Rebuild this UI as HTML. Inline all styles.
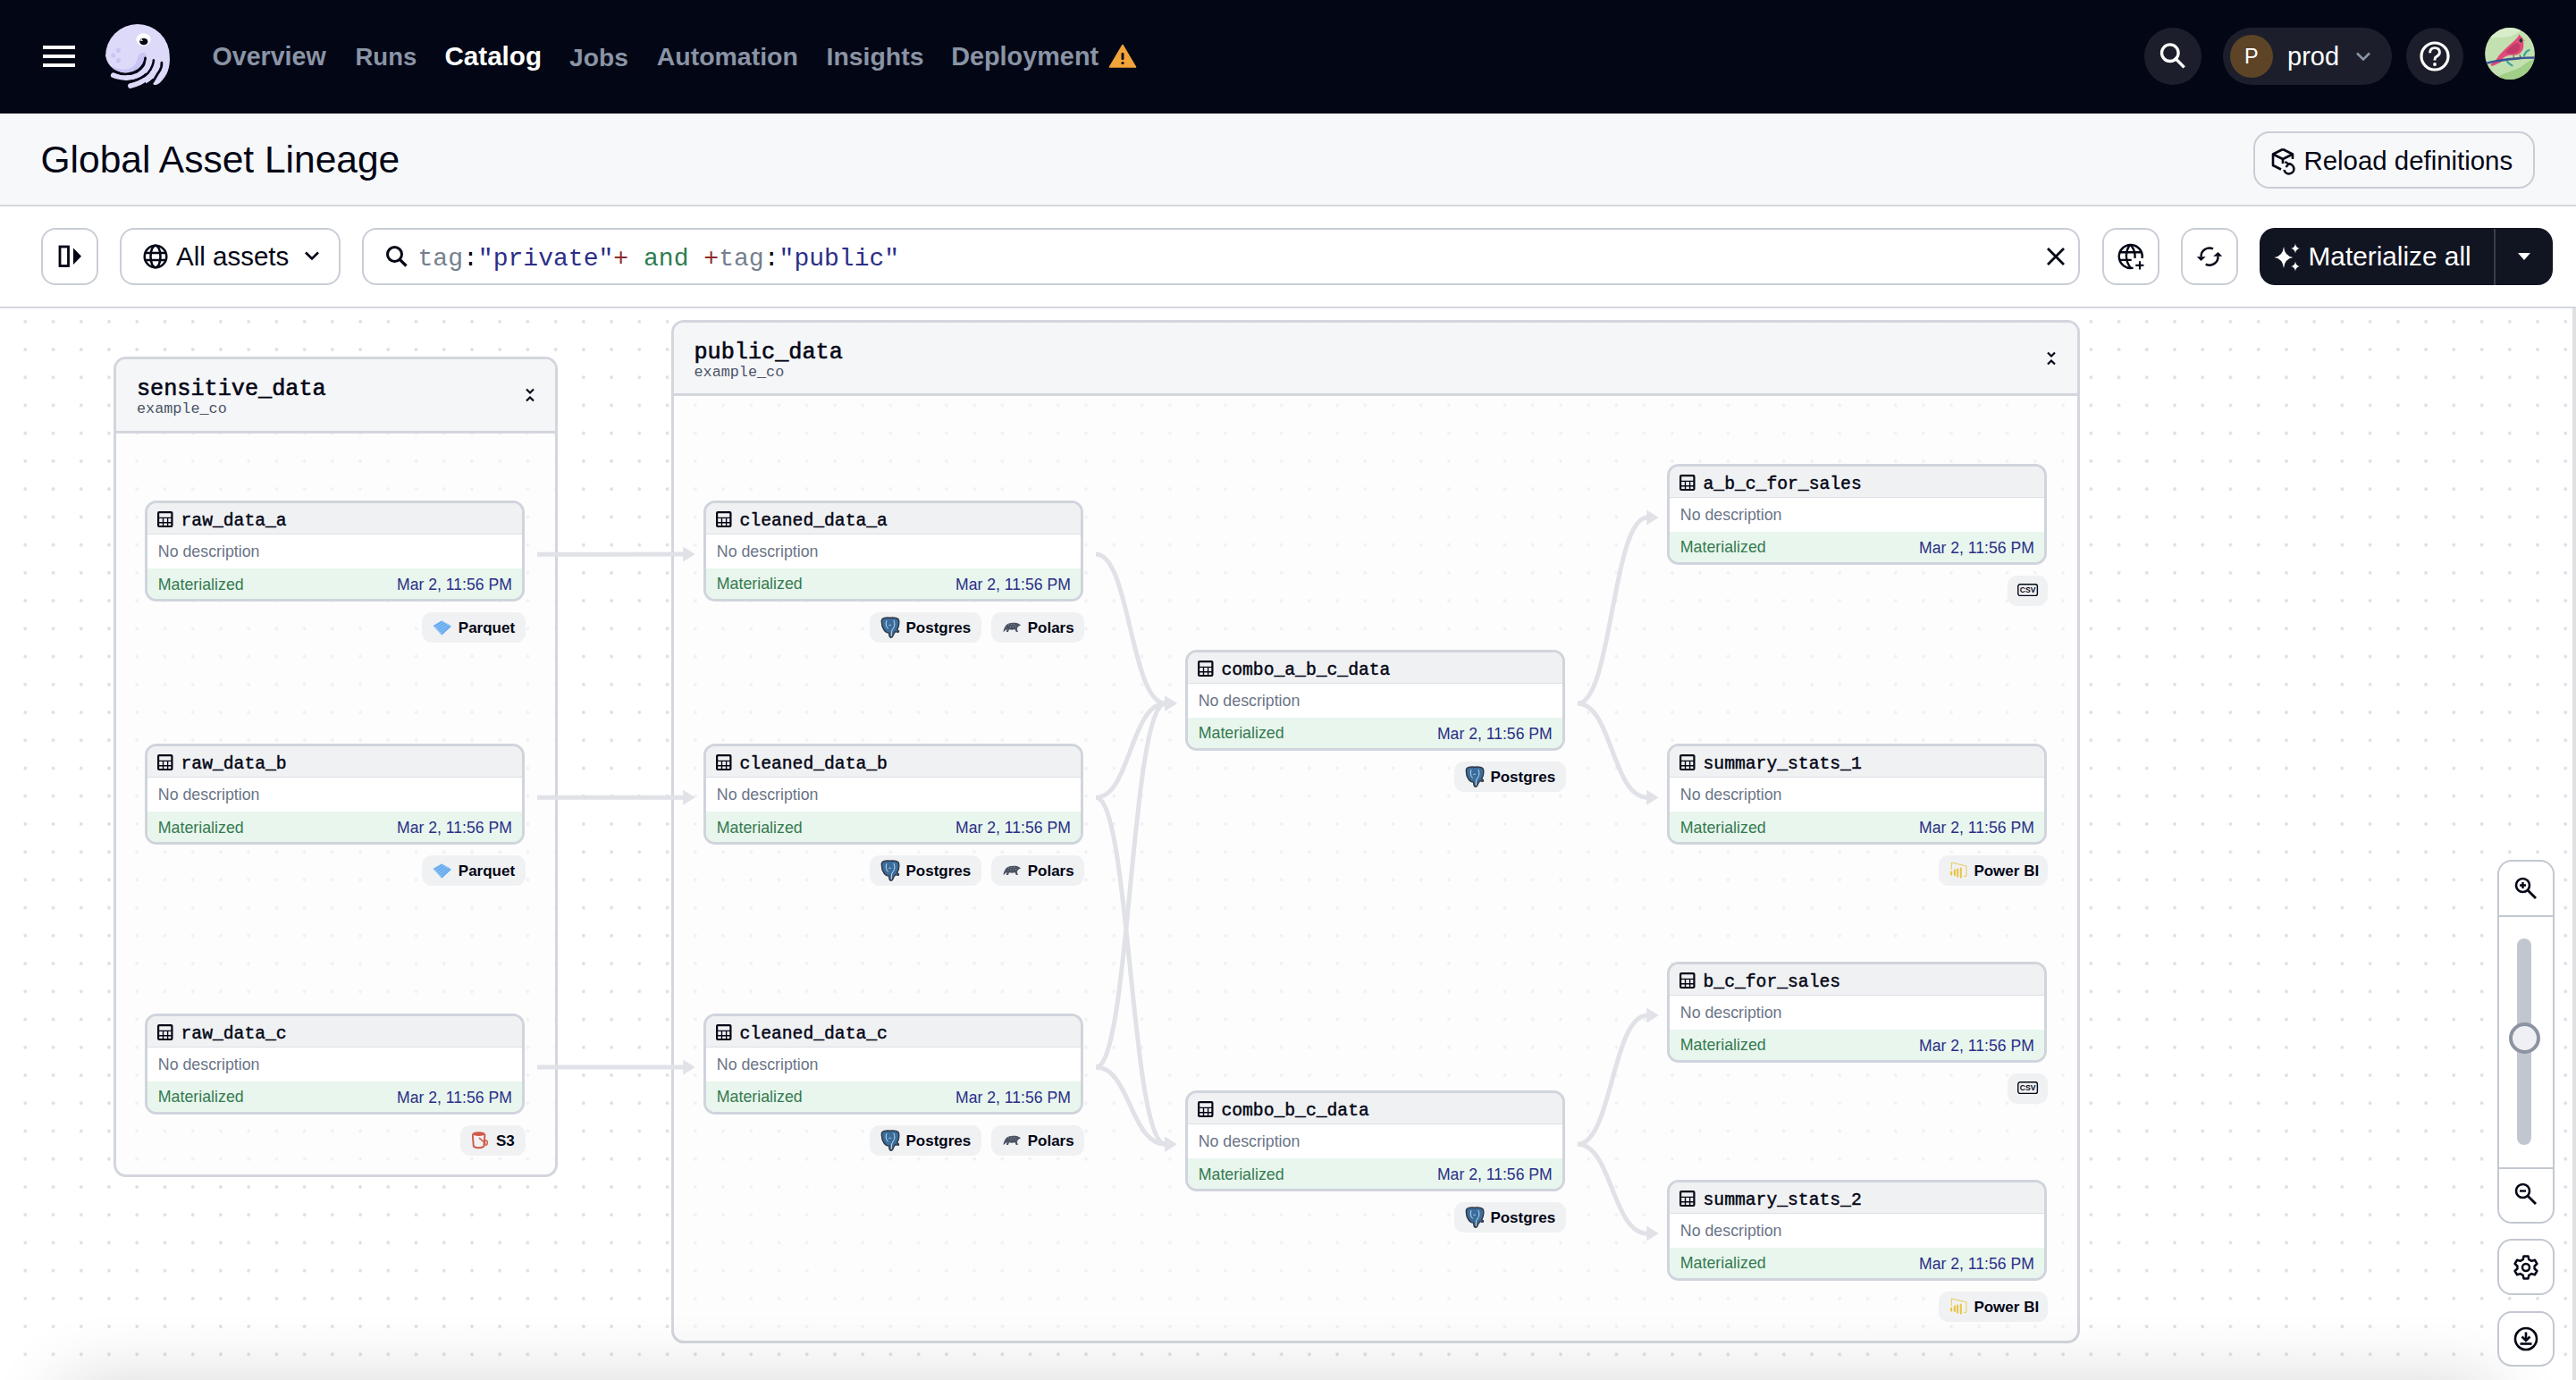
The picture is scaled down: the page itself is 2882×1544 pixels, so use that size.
<!DOCTYPE html><html><head><meta charset='utf-8'><style>
*{box-sizing:border-box;}
html,body{margin:0;padding:0;}
body{width:2882px;height:1544px;overflow:hidden;position:relative;background:#fff;font-family:"Liberation Sans", sans-serif;}
.a{position:absolute;}
.t{position:absolute;white-space:pre;line-height:1;}
.navl{position:absolute;white-space:pre;font-weight:700;font-size:28px;color:#8a94a5;line-height:1;}
.node{position:absolute;width:425px;height:113px;border:3px solid #d0d4dc;border-radius:13px;overflow:hidden;background:#fff;}
.nh{position:absolute;left:0;top:0;right:0;height:35px;background:#f0f1f3;border-bottom:1px solid #dcdfe4;}
.ns{position:absolute;left:0;right:0;bottom:0;height:34px;background:#e8f6ee;}
.nm{position:absolute;white-space:pre;font-family:"Liberation Mono", monospace;font-weight:400;font-size:19.7px;color:#030615;line-height:1;-webkit-text-stroke:0.45px #030615;}
.nd{position:absolute;white-space:pre;font-size:17.8px;color:#6b7487;line-height:1;}
.mat{position:absolute;white-space:pre;font-size:17.8px;color:#357a4f;line-height:1;}
.dt{position:absolute;white-space:pre;font-size:17.5px;color:#2c2f87;line-height:1;}
.tag{position:absolute;height:34px;background:#f0f1f3;border-radius:11px;}
.tagt{position:absolute;white-space:pre;font-weight:700;font-size:17px;color:#030615;line-height:1;}
.btn{position:absolute;border:2px solid #c9ced6;border-radius:16px;background:#fff;}
</style></head><body>
<div class='a' style='left:0;top:0;width:2882px;height:127px;background:#030615;'></div>
<div class='a' style='left:48px;top:51px;width:36px;height:4px;background:#fff;'></div>
<div class='a' style='left:48px;top:61px;width:36px;height:4px;background:#fff;'></div>
<div class='a' style='left:48px;top:71px;width:36px;height:4px;background:#fff;'></div>
<svg class='a' style='left:110px;top:20px' width='90' height='85' viewBox='0 0 90 85'>
<defs><mask id='lm' maskUnits='userSpaceOnUse' x='0' y='0' width='90' height='85'>
<circle cx='43.9' cy='43' r='35.9' fill='#fff'/>
<path d='M0 30 L8.1 43 C9.5 50 14 56 20 59 C26 62 33 62.8 39 61 C45 59 50 53 52.5 45 L53 73.6 C56 71.9 58.5 70.1 60.6 68 L66 70 L66 100 L0 100 Z' fill='#000'/>
<path d='M16.8 64.2 C20 65.6 26 66.8 31.4 67 C36 67 41 66 45 64 C50 61 54 56.5 56 52 C57 50 57.6 47.5 58 45' stroke='#fff' stroke-width='5.8' fill='none' stroke-linecap='round'/>
<path d='M36 76 C39 75.3 42.5 74 46.4 72.3 C51 70 54.5 67.5 57 64.5 C60 61 62.5 57.5 63.5 55 C64.5 52 65.5 50 66 47' stroke='#fff' stroke-width='5.8' fill='none' stroke-linecap='round'/>
<path d='M79.8 44 C80.3 55 77.8 64 69 72.6 C67 74.6 64.5 75.6 62.6 74.9 C60.8 74.2 60.3 72.3 61.3 70.8 L70 52 Z' fill='#fff'/>
<path d='M52.6 44.8 C52.4 47 51.8 49 51 51 C49.8 53.4 48.3 55.3 46.5 57 C44.3 59 41.8 60.4 39 61.3 C36.2 62.2 33.4 62.8 30.5 63 C27.5 63.1 24.7 62.6 22 61.5 C19.2 60.4 16.5 58.8 14 57' stroke='#000' stroke-width='2.7' fill='none' stroke-linecap='round'/>
<path d='M61.9 47.3 C61.8 49.1 61.5 50.9 60.8 52.6 C59.7 55.8 58 58.7 55.9 61.3 C53.2 64.4 50 66.5 46.4 67.9 C43.4 69.4 40.2 70.4 37 71.1 C34 71.8 31 72.3 28 72.5 C25.3 72.6 22.6 72.4 20 72' stroke='#000' stroke-width='2.6' fill='none' stroke-linecap='round'/>
<path d='M70.9 50.2 C70.9 51.7 70.8 53.1 70.6 54.5 C69.9 57.7 68.2 60.5 66 63.2 C64.6 65.8 63.1 68.3 61.5 70.7 C60.4 72.5 59.2 74.3 58 76 C57 77.4 56 78.8 55 80' stroke='#000' stroke-width='2.8' fill='none' stroke-linecap='round'/>
</mask></defs>
<g mask='url(#lm)'>
<rect width='90' height='85' fill='#dcdaf8'/>
<path d='M50.2 38.9 C52.8 38.9 54.3 40.6 54.2 43.5 L53.5 47 C51 55 44 61.5 33 62.6 C24 63.3 16 59.5 11.5 52 C16 55.5 22 57.8 29 57.7 C36 57.5 40.5 54 42.6 49 C43.8 45.5 44.5 42.8 45.8 41 C46.8 39.6 48.4 38.9 50.2 38.9 Z' fill='#c9c5f4'/>
<circle cx='22.3' cy='36.4' r='2.6' fill='#c9c5f4'/><circle cx='16.7' cy='42.1' r='2.6' fill='#c9c5f4'/><circle cx='22.3' cy='47.7' r='2.6' fill='#c9c5f4'/>
</g>
<ellipse cx='50.5' cy='24.3' rx='8' ry='7.1' fill='#fff'/>
<ellipse cx='50.8' cy='26.5' rx='4.6' ry='3.8' fill='#030615'/>
<path d='M46.6 25.6 L48.8 23.5 L49.8 25.9 Z' fill='#fff'/>
</svg>
<div class='navl' style='left:237.5px;top:49.18px;font-size:28.61px;color:#8a94a5'>Overview</div>
<div class='navl' style='left:397.5px;top:50.12px;font-size:27.5px;color:#8a94a5'>Runs</div>
<div class='navl' style='left:497.4px;top:48.31px;font-size:29.64px;color:#ffffff'>Catalog</div>
<div class='navl' style='left:637.1px;top:49.55px;font-size:28.18px;color:#8a94a5'>Jobs</div>
<div class='navl' style='left:734.7px;top:49.28px;font-size:28.49px;color:#8a94a5'>Automation</div>
<div class='navl' style='left:924.5px;top:49.33px;font-size:28.43px;color:#8a94a5'>Insights</div>
<div class='navl' style='left:1064.2px;top:49.0px;font-size:28.82px;color:#8a94a5'>Deployment</div>
<svg class='a' style='left:1240px;top:49px' width='32' height='27' viewBox='0 0 32 27'>
<path d='M16 1.5 L30.5 26 L1.5 26 Z' fill='#f2a33a' stroke='#f2a33a' stroke-width='1.5' stroke-linejoin='round'/>
<rect x='14.6' y='10' width='2.8' height='8' rx='1' fill='#030615'/><circle cx='16' cy='21.5' r='1.6' fill='#030615'/>
</svg>
<div class='a' style='left:2399px;top:31px;width:64px;height:64px;border-radius:32px;background:#1c1f2b;'></div>
<svg class='a' style='left:2414px;top:46px' width='34' height='34' viewBox='0 0 34 34'>
<circle cx='13.8' cy='13.2' r='9.3' stroke='#fff' stroke-width='3.3' fill='none'/><path d='M20.2 19.8 L28.5 28.2' stroke='#fff' stroke-width='3.4' stroke-linecap='square'/></svg>
<div class='a' style='left:2487px;top:31px;width:189px;height:64px;border-radius:32px;background:#1c1f2b;'></div>
<div class='a' style='left:2495px;top:39px;width:48px;height:48px;border-radius:24px;background:#5e4426;'></div>
<div class='t' style='left:2511px;top:51.61px;font-size:23.5px;color:#fff'>P</div>
<div class='t' style='left:2559px;top:48.65px;font-size:29px;color:#fff'>prod</div>
<svg class='a' style='left:2634px;top:56px' width='20' height='14' viewBox='0 0 20 14'><path d='M3 3.5 L10 10.5 L17 3.5' stroke='#8a94a5' stroke-width='2.6' fill='none'/></svg>
<div class='a' style='left:2692px;top:31px;width:64px;height:64px;border-radius:32px;background:#1c1f2b;'></div>
<svg class='a' style='left:2706px;top:45px' width='36' height='36' viewBox='0 0 36 36'>
<circle cx='18' cy='18' r='15' stroke='#fff' stroke-width='3.2' fill='none'/>
<path d='M12.6 14.2 Q12.6 8.6 18 8.6 Q23.4 8.6 23.4 13.6 Q23.4 16.8 19.8 18.4 Q18 19.2 18 21.5 L18 22.5' stroke='#fff' stroke-width='2.9' fill='none'/>
<circle cx='18' cy='27' r='1.9' fill='#fff'/></svg>
<svg class='a' style='left:2780px;top:31px' width='56' height='58' viewBox='0 0 56 58'>
<defs><clipPath id='av'><ellipse cx='28' cy='29' rx='27.9' ry='28.9'/></clipPath></defs>
<g clip-path='url(#av)'>
<rect width='56' height='58' fill='#c3e1b0'/>
<path d='M0 14 C12 8, 25 14, 36 6 C40 3, 44 1, 48 0 L0 0 Z' fill='#d9edca'/>
<path d='M12 58 C18 50, 30 50, 40 44 C46 40, 50 36, 56 35 L56 58 Z' fill='#a2cf88'/>
<path d='M44 31 C45 28, 47 26, 49.5 25' stroke='#3ea69a' stroke-width='2.4' fill='none' stroke-linecap='round'/>
<path d='M25 38 C27 40, 29 41.5, 30.5 42.3' stroke='#3ea69a' stroke-width='2.4' fill='none' stroke-linecap='round'/>
<path d='M38.3 7.4 L40.5 9.8 Q42.5 10.8 42.7 12.4 Q44 20 42.5 24.5 Q40 29.5 35 30.5 L28 30.8 Q24 31.5 21 33.5 L18 38.5 L9 42.8 Q6 43 6.5 41 L12.5 36 L16.2 30.4 Q24 22 32 15.5 Q36 12 37.5 9.5 Z' fill='#e24a7b'/>
<path d='M23 28 Q29 19.5 35.5 17 Q40 17.5 39 24 Q37 28.5 30 29.5 Z' fill='#c23a67'/>
<path d='M42.2 12.4 L45.6 14.2 L42.3 15.8 Z' fill='#f0907c'/>
<ellipse cx='40.4' cy='14.3' rx='1.8' ry='2.2' fill='#203a3a'/>
<path d='M1 40 C15 36, 28 35, 40 34 C46 33.5, 52 33.5, 56 33.5' stroke='#3b5594' stroke-width='2.6' fill='none'/>
<path d='M32 30.5 L32.5 34.5 M39 30 L40 34' stroke='#5a3a4a' stroke-width='0.9'/>
</g></svg>
<div class='a' style='left:0;top:127px;width:2882px;height:102px;background:#f7f8fa;'></div>
<div class='a' style='left:0;top:229px;width:2882px;height:2px;background:#d5d8de;'></div>
<div class='t' style='left:45.5px;top:158.22px;font-size:42.5px;color:#030615'>Global Asset Lineage</div>
<div class='btn' style='left:2521px;top:147px;width:314.5px;height:63.5px;border-radius:18px;background:#f7f8fa;'></div>
<svg class='a' style='left:2539px;top:164px' width='32' height='32' viewBox='0 0 32 32'>
<path d='M15 3 L26 8.5 L26 14 M15 3 L4 8.5 L4 21 L13 25.5 M4 8.5 L15 14 L26 8.5 M15 14 L15 19' stroke='#030615' stroke-width='2.6' fill='none' stroke-linejoin='round'/>
<path d='M21 19.5 A5.5 5.5 0 1 1 16.5 26' stroke='#030615' stroke-width='2.6' fill='none'/>
<path d='M17.5 17 L21.5 19.5 L18.5 23' stroke='#030615' stroke-width='2.4' fill='none'/>
</svg>
<div class='t' style='left:2577.5px;top:164.91px;font-size:29.4px;color:#030615'>Reload definitions</div>
<div class='a' style='left:0;top:343px;width:2882px;height:2px;background:#d5d8de;'></div>
<div class='btn' style='left:46px;top:255px;width:64px;height:64px;'></div>
<svg class='a' style='left:62px;top:271px' width='32' height='32' viewBox='0 0 32 32'>
<rect x='5' y='5' width='9.5' height='21.5' stroke='#030615' stroke-width='2.8' fill='none'/>
<path d='M20 6.5 L29 15.8 L20 25 Z' fill='#030615'/></svg>
<div class='btn' style='left:134px;top:255px;width:247px;height:64px;'></div>
<svg class='a' style='left:158px;top:271px' width='32' height='32' viewBox='0 0 32 32'>
<circle cx='16' cy='16' r='12.3' stroke='#030615' stroke-width='2.5' fill='none'/>
<ellipse cx='16' cy='16' rx='5.5' ry='12.3' stroke='#030615' stroke-width='2.5' fill='none'/>
<path d='M4 12 H28 M4 20 H28' stroke='#030615' stroke-width='2.5'/></svg>
<div class='t' style='left:197px;top:272.33px;font-size:29.5px;color:#030615'>All assets</div>
<svg class='a' style='left:338px;top:278px' width='22' height='16' viewBox='0 0 22 16'><path d='M4 4.5 L11 11.5 L18 4.5' stroke='#030615' stroke-width='2.6' fill='none'/></svg>
<div class='btn' style='left:405px;top:255px;width:1922px;height:63.5px;'></div>
<svg class='a' style='left:428px;top:271px' width='32' height='32' viewBox='0 0 32 32'>
<circle cx='13.5' cy='13.5' r='8' stroke='#030615' stroke-width='3' fill='none'/><path d='M19.3 19.3 L26.5 26.5' stroke='#030615' stroke-width='3.2'/></svg>
<div class='t' style='left:467.5px;top:276.3px;font-family:"Liberation Mono", monospace;font-size:28.05px;'><span style='color:#767f8e'>tag</span><span style='color:#030615'>:</span><span style='color:#2c2f87'>"private"</span><span style='color:#8b2b2b'>+</span> <span style='color:#2e7d4f'>and</span> <span style='color:#8b2b2b'>+</span><span style='color:#767f8e'>tag</span><span style='color:#030615'>:</span><span style='color:#2c2f87'>"public"</span></div>
<svg class='a' style='left:2284px;top:271px' width='32' height='32' viewBox='0 0 32 32'><path d='M7 7 L25 25 M25 7 L7 25' stroke='#030615' stroke-width='2.8'/></svg>
<div class='btn' style='left:2352px;top:255px;width:63.5px;height:63.5px;'></div>
<svg class='a' style='left:2364px;top:268px' width='40' height='38' viewBox='0 0 40 38'>
<path d='M32.6 20.9 A13 13 0 1 0 22.6 31.6' stroke='#030615' stroke-width='2.5' fill='none'/>
<path d='M7.2 14.2 H32.4 M7.2 22.9 H20.7' stroke='#030615' stroke-width='2.4'/>
<path d='M19.4 5.6 C16 9.5 14.9 14 14.9 18.5 C14.9 23.5 16.5 27.5 19.6 31.6' stroke='#030615' stroke-width='2.4' fill='none'/>
<path d='M19.4 5.6 C22.4 9.2 24.3 13 24.5 17 L24.6 20.9' stroke='#030615' stroke-width='2.4' fill='none'/>
<path d='M30 24.2 V33.6 M25.3 28.9 H34.4' stroke='#030615' stroke-width='2.1'/></svg>
<div class='btn' style='left:2440px;top:255px;width:63.5px;height:63.5px;'></div>
<svg class='a' style='left:2452px;top:268px' width='40' height='38' viewBox='0 0 40 38'>
<path d='M24 10.4 A9.5 9.5 0 0 0 10.5 19.3' stroke='#030615' stroke-width='2.4' fill='none'/>
<path d='M15.7 27.6 A9.5 9.5 0 0 0 29.5 18.7' stroke='#030615' stroke-width='2.4' fill='none'/>
<path d='M5.8 19.3 L15.7 19.3 L10.5 24 Z M24.2 18.7 L34.2 18.7 L29.5 14 Z' fill='#030615'/></svg>
<div class='a' style='left:2528px;top:255px;width:328px;height:63.5px;border-radius:17px;background:#111421;'></div>
<div class='a' style='left:2790px;top:255.5px;width:1.5px;height:63px;background:#3a3e4c;'></div>
<svg class='a' style='left:2543px;top:271px' width='34' height='34' viewBox='0 0 34 34'>
<path d='M12 5 Q13 15.5 22.5 17 Q13 18.5 12 29 Q11 18.5 1.5 17 Q11 15.5 12 5Z' fill='#fff'/>
<path d='M25 1.5 Q25.6 6.3 30 7 Q25.6 7.7 25 12.5 Q24.4 7.7 20 7 Q24.4 6.3 25 1.5Z' fill='#fff'/>
<path d='M25 21.5 Q25.6 26.3 30 27 Q25.6 27.7 25 32.5 Q24.4 27.7 20 27 Q24.4 26.3 25 21.5Z' fill='#fff'/></svg>
<div class='t' style='left:2582.5px;top:272.37px;font-size:29.8px;color:#fff'>Materialize all</div>
<svg class='a' style='left:2814px;top:279px' width='20' height='16' viewBox='0 0 20 16'><path d='M3 4 L17 4 L10 12 Z' fill='#fff'/></svg>
<svg class='a' style='left:0;top:345px' width='2882' height='1199'>
<defs><pattern id='dots' patternUnits='userSpaceOnUse' width='31.23' height='31.23' x='106.385' y='-0.8149999999999888'>
<circle cx='15.615' cy='15.615' r='1.85' fill='#dcdee3'/></pattern>
<linearGradient id='bsh' x1='0' y1='0' x2='0' y2='1'><stop offset='0' stop-color='#e4e5e8' stop-opacity='0'/><stop offset='1' stop-color='#e4e5e8' stop-opacity='1'/></linearGradient>
</defs>
<rect width='2882' height='1199' fill='url(#dots)'/>
</svg>
<div class='a' style='left:127px;top:399px;width:497px;height:918px;border:3px solid #d3d6dd;border-radius:14px;background:rgba(251,251,252,0.62);overflow:hidden'><div class='a' style='left:0;top:0;right:0;height:83px;background:#f5f6f8;border-bottom:3px solid #d3d6dd'></div></div>
<div class='t' style='left:153px;top:423.4px;font-family:"Liberation Mono", monospace;font-weight:400;font-size:25.2px;color:#030615;-webkit-text-stroke:0.6px #030615'>sensitive_data</div>
<div class='t' style='left:153px;top:449.79999999999995px;font-family:"Liberation Mono", monospace;font-size:16.8px;color:#4b5466'>example_co</div>
<svg class='a' style='left:584.5px;top:431.5px' width='16' height='20' viewBox='0 0 16 20'><path d='M4 3.5 L8 7.5 L12 3.5 M4 16.5 L8 12.5 L12 16.5' stroke='#030615' stroke-width='2.2' fill='none'/></svg>
<div class='a' style='left:751px;top:358px;width:1576px;height:1145px;border:3px solid #d3d6dd;border-radius:14px;background:rgba(251,251,252,0.62);overflow:hidden'><div class='a' style='left:0;top:0;right:0;height:82px;background:#f5f6f8;border-bottom:3px solid #d3d6dd'></div></div>
<div class='t' style='left:776.5px;top:382.2px;font-family:"Liberation Mono", monospace;font-weight:400;font-size:25.2px;color:#030615;-webkit-text-stroke:0.6px #030615'>public_data</div>
<div class='t' style='left:776.5px;top:408.59999999999997px;font-family:"Liberation Mono", monospace;font-size:16.8px;color:#4b5466'>example_co</div>
<svg class='a' style='left:2287px;top:390.5px' width='16' height='20' viewBox='0 0 16 20'><path d='M4 3.5 L8 7.5 L12 3.5 M4 16.5 L8 12.5 L12 16.5' stroke='#030615' stroke-width='2.2' fill='none'/></svg>
<svg class='a' style='left:0;top:0' width='2882' height='1544'><path d='M601.0 620.2 C682.6 620.2 682.6 620.1 765.2 620.1' stroke='#e0e2e7' stroke-width='5' fill='none'/><path d='M764.2 611.6 L777.7 620.1 L764.2 628.6 Z' fill='#e0e2e7'/><path d='M601.0 892.2 C682.6 892.2 682.6 892.2 765.2 892.2' stroke='#e0e2e7' stroke-width='5' fill='none'/><path d='M764.2 883.7 L777.7 892.2 L764.2 900.7 Z' fill='#e0e2e7'/><path d='M601.0 1194.1 C682.6 1194.1 682.6 1194.1 765.2 1194.1' stroke='#e0e2e7' stroke-width='5' fill='none'/><path d='M764.2 1185.6 L777.7 1194.1 L764.2 1202.6 Z' fill='#e0e2e7'/><path d='M1226.0 620.1 C1264.55 620.1 1264.55 787.1 1304.1 787.1' stroke='#e0e2e7' stroke-width='5' fill='none'/><path d='M1303.1 778.6 L1316.6 787.1 L1303.1 795.6 Z' fill='#e0e2e7'/><path d='M1226.0 892.2 C1264.55 892.2 1264.55 787.1 1304.1 787.1' stroke='#e0e2e7' stroke-width='5' fill='none'/><path d='M1303.1 778.6 L1316.6 787.1 L1303.1 795.6 Z' fill='#e0e2e7'/><path d='M1226.0 1194.1 C1264.55 1194.1 1264.55 787.1 1304.1 787.1' stroke='#e0e2e7' stroke-width='5' fill='none'/><path d='M1303.1 778.6 L1316.6 787.1 L1303.1 795.6 Z' fill='#e0e2e7'/><path d='M1226.0 892.2 C1264.55 892.2 1264.55 1280.2 1304.1 1280.2' stroke='#e0e2e7' stroke-width='5' fill='none'/><path d='M1303.1 1271.7 L1316.6 1280.2 L1303.1 1288.7 Z' fill='#e0e2e7'/><path d='M1226.0 1194.1 C1264.55 1194.1 1264.55 1280.2 1304.1 1280.2' stroke='#e0e2e7' stroke-width='5' fill='none'/><path d='M1303.1 1271.7 L1316.6 1280.2 L1303.1 1288.7 Z' fill='#e0e2e7'/><path d='M1764.8999999999999 787.1 C1803.55 787.1 1803.55 579.1 1843.2 579.1' stroke='#e0e2e7' stroke-width='5' fill='none'/><path d='M1842.2 570.6 L1855.7 579.1 L1842.2 587.6 Z' fill='#e0e2e7'/><path d='M1764.8999999999999 787.1 C1803.55 787.1 1803.55 892.2 1843.2 892.2' stroke='#e0e2e7' stroke-width='5' fill='none'/><path d='M1842.2 883.7 L1855.7 892.2 L1842.2 900.7 Z' fill='#e0e2e7'/><path d='M1764.8999999999999 1280.2 C1803.55 1280.2 1803.55 1136.1 1843.2 1136.1' stroke='#e0e2e7' stroke-width='5' fill='none'/><path d='M1842.2 1127.6 L1855.7 1136.1 L1842.2 1144.6 Z' fill='#e0e2e7'/><path d='M1764.8999999999999 1280.2 C1803.55 1280.2 1803.55 1380.1 1843.2 1380.1' stroke='#e0e2e7' stroke-width='5' fill='none'/><path d='M1842.2 1371.6 L1855.7 1380.1 L1842.2 1388.6 Z' fill='#e0e2e7'/></svg>
<div class='node' style='left:162px;top:560px'><div class='nh'></div><div class='ns'></div></div>
<svg class='a' style='left:176.2px;top:571.6px' width='18' height='19' viewBox='0 0 18 19'>
<rect x='1.1' y='1.1' width='15.3' height='15.9' rx='1' stroke='#030615' stroke-width='2.2' fill='none'/>
<path d='M1.1 7.4 H16.4 M1.1 12.8 H16.4 M6.5 7.4 V17 M11.6 7.4 V17' stroke='#030615' stroke-width='1.4'/></svg>
<div class='nm' style='left:202.5px;top:574.2px'>raw_data_a</div>
<div class='nd' style='left:176.79999999999998px;top:609.13px'>No description</div>
<div class='mat' style='left:176.79999999999998px;top:645.53px'>Materialized</div>
<div class='dt' style='right:2309.2px;top:645.7px;font-size:17.6px'>Mar 2, 11:56 PM</div>
<div class='tag' style='left:472.20000000000005px;top:685.0px;width:115.5px'></div>
<svg class='a' style='left:484.30000000000007px;top:693.5px' width='21' height='17' viewBox='0 0 21 17'>
<path d='M0.3 5.9 L10.2 0.2 L20.6 5.9 L10.2 16.8 Z' fill='#8cc1f3'/>
<path d='M2.5 6.6 L10.5 1.6 M4.8 8.6 L13 3.2 M6.8 10.8 L15.4 4.6 M8.6 13 L17.8 6 M10.2 15.4 L20 6.6' stroke='#5ea6ee' stroke-width='1.5'/></svg>
<div class='tagt' style='left:512.8000000000001px;top:694.21px'>Parquet</div>
<div class='node' style='left:162px;top:832px'><div class='nh'></div><div class='ns'></div></div>
<svg class='a' style='left:176.2px;top:843.6px' width='18' height='19' viewBox='0 0 18 19'>
<rect x='1.1' y='1.1' width='15.3' height='15.9' rx='1' stroke='#030615' stroke-width='2.2' fill='none'/>
<path d='M1.1 7.4 H16.4 M1.1 12.8 H16.4 M6.5 7.4 V17 M11.6 7.4 V17' stroke='#030615' stroke-width='1.4'/></svg>
<div class='nm' style='left:202.5px;top:846.2px'>raw_data_b</div>
<div class='nd' style='left:176.79999999999998px;top:881.13px'>No description</div>
<div class='mat' style='left:176.79999999999998px;top:917.53px'>Materialized</div>
<div class='dt' style='right:2309.2px;top:917.7px;font-size:17.6px'>Mar 2, 11:56 PM</div>
<div class='tag' style='left:472.20000000000005px;top:957.0px;width:115.5px'></div>
<svg class='a' style='left:484.30000000000007px;top:965.5px' width='21' height='17' viewBox='0 0 21 17'>
<path d='M0.3 5.9 L10.2 0.2 L20.6 5.9 L10.2 16.8 Z' fill='#8cc1f3'/>
<path d='M2.5 6.6 L10.5 1.6 M4.8 8.6 L13 3.2 M6.8 10.8 L15.4 4.6 M8.6 13 L17.8 6 M10.2 15.4 L20 6.6' stroke='#5ea6ee' stroke-width='1.5'/></svg>
<div class='tagt' style='left:512.8000000000001px;top:966.21px'>Parquet</div>
<div class='node' style='left:162px;top:1134px'><div class='nh'></div><div class='ns'></div></div>
<svg class='a' style='left:176.2px;top:1145.5px' width='18' height='19' viewBox='0 0 18 19'>
<rect x='1.1' y='1.1' width='15.3' height='15.9' rx='1' stroke='#030615' stroke-width='2.2' fill='none'/>
<path d='M1.1 7.4 H16.4 M1.1 12.8 H16.4 M6.5 7.4 V17 M11.6 7.4 V17' stroke='#030615' stroke-width='1.4'/></svg>
<div class='nm' style='left:202.5px;top:1148.1px'>raw_data_c</div>
<div class='nd' style='left:176.79999999999998px;top:1183.03px'>No description</div>
<div class='mat' style='left:176.79999999999998px;top:1219.43px'>Materialized</div>
<div class='dt' style='right:2309.2px;top:1219.6px;font-size:17.6px'>Mar 2, 11:56 PM</div>
<div class='tag' style='left:515.2px;top:1258.8999999999999px;width:72.5px'></div>
<svg class='a' style='left:528.2px;top:1265.8999999999999px' width='19' height='20' viewBox='0 0 19 20'>
<ellipse cx='7.6' cy='2.6' rx='7.2' ry='2.3' fill='#cf5a48'/>
<path d='M0.7 3 L1.8 16.6 Q7.6 20 13.4 16.6 L14.5 3' fill='none' stroke='#cf5a48' stroke-width='1.9'/>
<path d='M8 7.2 L15.5 13.5' stroke='#cf5a48' stroke-width='1.6'/><ellipse cx='15.6' cy='12.6' rx='1.7' ry='2.6' fill='none' stroke='#cf5a48' stroke-width='1.4'/></svg>
<div class='tagt' style='left:555.0px;top:1268.11px'>S3</div>
<div class='node' style='left:787px;top:560px'><div class='nh'></div><div class='ns'></div></div>
<svg class='a' style='left:801.2px;top:571.5px' width='18' height='19' viewBox='0 0 18 19'>
<rect x='1.1' y='1.1' width='15.3' height='15.9' rx='1' stroke='#030615' stroke-width='2.2' fill='none'/>
<path d='M1.1 7.4 H16.4 M1.1 12.8 H16.4 M6.5 7.4 V17 M11.6 7.4 V17' stroke='#030615' stroke-width='1.4'/></svg>
<div class='nm' style='left:827.5px;top:574.1px'>cleaned_data_a</div>
<div class='nd' style='left:801.8000000000001px;top:609.03px'>No description</div>
<div class='mat' style='left:801.8000000000001px;top:645.43px'>Materialized</div>
<div class='dt' style='right:1684.2px;top:645.6px;font-size:17.6px'>Mar 2, 11:56 PM</div>
<div class='tag' style='left:1109.1000000000001px;top:684.9px;width:103.6px'></div>
<svg class='a' style='left:1121.8000000000002px;top:695.9px' width='21' height='12' viewBox='0 0 21 12'>
<path d='M0.5 11.2 C1 7.5 2.6 3.4 6 1.8 C9 0.6 13 0.4 15.6 1 L18 2 L20.2 3.6 L17.8 4.4 C16.8 5.2 16.2 6.2 15.8 7.6 L16.9 11 L14.8 11 L13.6 8.3 C11 8.8 9 8.8 7 8.3 L6 11 L3.9 11 L4.4 7.8 C3 8.8 2 10 0.5 11.2 Z' fill='#4c5363'/>
<path d='M6 3 h1 M9 2.5 h1 M12 2.5 h1 M8 5 h1 M11 5 h1 M14 4.5 h1' stroke='#aab0bb' stroke-width='0.7'/></svg>
<div class='tagt' style='left:1149.7px;top:694.11px'>Polars</div>
<div class='tag' style='left:973.1px;top:684.9px;width:124.6px'></div>
<svg class='a' style='left:982.9px;top:689.65px' width='25.5' height='24.5' viewBox='0 0 24 24' preserveAspectRatio='none'>
<path d='M3.2 4 C3.5 1.2 8 0.6 12 1.2 C16 0.6 21 1.2 21.3 4.2 C21.8 8.5 21 12 19.4 14.2 L21 15.4 C21.6 16.3 20.8 17.2 19.6 16.8 L17.6 16.2 C16.6 18.2 15.6 19.3 15.1 20.8 C14.6 22.6 13.4 23 12.4 22.6 C11.4 22.1 11 20.3 11 17.8 C8.8 17.6 6.8 16.4 5.4 14 C3.5 11 3 7 3.2 4 Z' fill='#3a6d9c' stroke='#30343f' stroke-width='1.3' stroke-linejoin='round'/>
<path d='M8.4 4.2 C7.2 7.5 7.8 11 10 13.2 M15.8 3.8 C17.4 7 17 11 14.8 13.6 C13.6 15.2 13.2 18 13.6 21.2 M10.8 9.5 C11.5 8.8 12.5 8.8 13 9.5' stroke='#d8e4ef' stroke-width='0.9' fill='none'/></svg>
<div class='tagt' style='left:1013.5px;top:694.11px'>Postgres</div>
<div class='node' style='left:787px;top:832px'><div class='nh'></div><div class='ns'></div></div>
<svg class='a' style='left:801.2px;top:843.6px' width='18' height='19' viewBox='0 0 18 19'>
<rect x='1.1' y='1.1' width='15.3' height='15.9' rx='1' stroke='#030615' stroke-width='2.2' fill='none'/>
<path d='M1.1 7.4 H16.4 M1.1 12.8 H16.4 M6.5 7.4 V17 M11.6 7.4 V17' stroke='#030615' stroke-width='1.4'/></svg>
<div class='nm' style='left:827.5px;top:846.2px'>cleaned_data_b</div>
<div class='nd' style='left:801.8000000000001px;top:881.13px'>No description</div>
<div class='mat' style='left:801.8000000000001px;top:917.53px'>Materialized</div>
<div class='dt' style='right:1684.2px;top:917.7px;font-size:17.6px'>Mar 2, 11:56 PM</div>
<div class='tag' style='left:1109.1000000000001px;top:957.0px;width:103.6px'></div>
<svg class='a' style='left:1121.8000000000002px;top:968.0px' width='21' height='12' viewBox='0 0 21 12'>
<path d='M0.5 11.2 C1 7.5 2.6 3.4 6 1.8 C9 0.6 13 0.4 15.6 1 L18 2 L20.2 3.6 L17.8 4.4 C16.8 5.2 16.2 6.2 15.8 7.6 L16.9 11 L14.8 11 L13.6 8.3 C11 8.8 9 8.8 7 8.3 L6 11 L3.9 11 L4.4 7.8 C3 8.8 2 10 0.5 11.2 Z' fill='#4c5363'/>
<path d='M6 3 h1 M9 2.5 h1 M12 2.5 h1 M8 5 h1 M11 5 h1 M14 4.5 h1' stroke='#aab0bb' stroke-width='0.7'/></svg>
<div class='tagt' style='left:1149.7px;top:966.21px'>Polars</div>
<div class='tag' style='left:973.1px;top:957.0px;width:124.6px'></div>
<svg class='a' style='left:982.9px;top:961.75px' width='25.5' height='24.5' viewBox='0 0 24 24' preserveAspectRatio='none'>
<path d='M3.2 4 C3.5 1.2 8 0.6 12 1.2 C16 0.6 21 1.2 21.3 4.2 C21.8 8.5 21 12 19.4 14.2 L21 15.4 C21.6 16.3 20.8 17.2 19.6 16.8 L17.6 16.2 C16.6 18.2 15.6 19.3 15.1 20.8 C14.6 22.6 13.4 23 12.4 22.6 C11.4 22.1 11 20.3 11 17.8 C8.8 17.6 6.8 16.4 5.4 14 C3.5 11 3 7 3.2 4 Z' fill='#3a6d9c' stroke='#30343f' stroke-width='1.3' stroke-linejoin='round'/>
<path d='M8.4 4.2 C7.2 7.5 7.8 11 10 13.2 M15.8 3.8 C17.4 7 17 11 14.8 13.6 C13.6 15.2 13.2 18 13.6 21.2 M10.8 9.5 C11.5 8.8 12.5 8.8 13 9.5' stroke='#d8e4ef' stroke-width='0.9' fill='none'/></svg>
<div class='tagt' style='left:1013.5px;top:966.21px'>Postgres</div>
<div class='node' style='left:787px;top:1134px'><div class='nh'></div><div class='ns'></div></div>
<svg class='a' style='left:801.2px;top:1145.5px' width='18' height='19' viewBox='0 0 18 19'>
<rect x='1.1' y='1.1' width='15.3' height='15.9' rx='1' stroke='#030615' stroke-width='2.2' fill='none'/>
<path d='M1.1 7.4 H16.4 M1.1 12.8 H16.4 M6.5 7.4 V17 M11.6 7.4 V17' stroke='#030615' stroke-width='1.4'/></svg>
<div class='nm' style='left:827.5px;top:1148.1px'>cleaned_data_c</div>
<div class='nd' style='left:801.8000000000001px;top:1183.03px'>No description</div>
<div class='mat' style='left:801.8000000000001px;top:1219.43px'>Materialized</div>
<div class='dt' style='right:1684.2px;top:1219.6px;font-size:17.6px'>Mar 2, 11:56 PM</div>
<div class='tag' style='left:1109.1000000000001px;top:1258.8999999999999px;width:103.6px'></div>
<svg class='a' style='left:1121.8000000000002px;top:1269.8999999999999px' width='21' height='12' viewBox='0 0 21 12'>
<path d='M0.5 11.2 C1 7.5 2.6 3.4 6 1.8 C9 0.6 13 0.4 15.6 1 L18 2 L20.2 3.6 L17.8 4.4 C16.8 5.2 16.2 6.2 15.8 7.6 L16.9 11 L14.8 11 L13.6 8.3 C11 8.8 9 8.8 7 8.3 L6 11 L3.9 11 L4.4 7.8 C3 8.8 2 10 0.5 11.2 Z' fill='#4c5363'/>
<path d='M6 3 h1 M9 2.5 h1 M12 2.5 h1 M8 5 h1 M11 5 h1 M14 4.5 h1' stroke='#aab0bb' stroke-width='0.7'/></svg>
<div class='tagt' style='left:1149.7px;top:1268.11px'>Polars</div>
<div class='tag' style='left:973.1px;top:1258.8999999999999px;width:124.6px'></div>
<svg class='a' style='left:982.9px;top:1263.6499999999999px' width='25.5' height='24.5' viewBox='0 0 24 24' preserveAspectRatio='none'>
<path d='M3.2 4 C3.5 1.2 8 0.6 12 1.2 C16 0.6 21 1.2 21.3 4.2 C21.8 8.5 21 12 19.4 14.2 L21 15.4 C21.6 16.3 20.8 17.2 19.6 16.8 L17.6 16.2 C16.6 18.2 15.6 19.3 15.1 20.8 C14.6 22.6 13.4 23 12.4 22.6 C11.4 22.1 11 20.3 11 17.8 C8.8 17.6 6.8 16.4 5.4 14 C3.5 11 3 7 3.2 4 Z' fill='#3a6d9c' stroke='#30343f' stroke-width='1.3' stroke-linejoin='round'/>
<path d='M8.4 4.2 C7.2 7.5 7.8 11 10 13.2 M15.8 3.8 C17.4 7 17 11 14.8 13.6 C13.6 15.2 13.2 18 13.6 21.2 M10.8 9.5 C11.5 8.8 12.5 8.8 13 9.5' stroke='#d8e4ef' stroke-width='0.9' fill='none'/></svg>
<div class='tagt' style='left:1013.5px;top:1268.11px'>Postgres</div>
<div class='node' style='left:1326px;top:727px'><div class='nh'></div><div class='ns'></div></div>
<svg class='a' style='left:1340.1px;top:738.5px' width='18' height='19' viewBox='0 0 18 19'>
<rect x='1.1' y='1.1' width='15.3' height='15.9' rx='1' stroke='#030615' stroke-width='2.2' fill='none'/>
<path d='M1.1 7.4 H16.4 M1.1 12.8 H16.4 M6.5 7.4 V17 M11.6 7.4 V17' stroke='#030615' stroke-width='1.4'/></svg>
<div class='nm' style='left:1366.3999999999999px;top:741.1px'>combo_a_b_c_data</div>
<div class='nd' style='left:1340.6999999999998px;top:776.03px'>No description</div>
<div class='mat' style='left:1340.6999999999998px;top:812.43px'>Materialized</div>
<div class='dt' style='right:1145.3000000000002px;top:812.6px;font-size:17.6px'>Mar 2, 11:56 PM</div>
<div class='tag' style='left:1627.0px;top:851.9px;width:124.6px'></div>
<svg class='a' style='left:1636.8px;top:856.65px' width='25.5' height='24.5' viewBox='0 0 24 24' preserveAspectRatio='none'>
<path d='M3.2 4 C3.5 1.2 8 0.6 12 1.2 C16 0.6 21 1.2 21.3 4.2 C21.8 8.5 21 12 19.4 14.2 L21 15.4 C21.6 16.3 20.8 17.2 19.6 16.8 L17.6 16.2 C16.6 18.2 15.6 19.3 15.1 20.8 C14.6 22.6 13.4 23 12.4 22.6 C11.4 22.1 11 20.3 11 17.8 C8.8 17.6 6.8 16.4 5.4 14 C3.5 11 3 7 3.2 4 Z' fill='#3a6d9c' stroke='#30343f' stroke-width='1.3' stroke-linejoin='round'/>
<path d='M8.4 4.2 C7.2 7.5 7.8 11 10 13.2 M15.8 3.8 C17.4 7 17 11 14.8 13.6 C13.6 15.2 13.2 18 13.6 21.2 M10.8 9.5 C11.5 8.8 12.5 8.8 13 9.5' stroke='#d8e4ef' stroke-width='0.9' fill='none'/></svg>
<div class='tagt' style='left:1667.4px;top:861.11px'>Postgres</div>
<div class='node' style='left:1326px;top:1220px'><div class='nh'></div><div class='ns'></div></div>
<svg class='a' style='left:1340.1px;top:1231.6000000000001px' width='18' height='19' viewBox='0 0 18 19'>
<rect x='1.1' y='1.1' width='15.3' height='15.9' rx='1' stroke='#030615' stroke-width='2.2' fill='none'/>
<path d='M1.1 7.4 H16.4 M1.1 12.8 H16.4 M6.5 7.4 V17 M11.6 7.4 V17' stroke='#030615' stroke-width='1.4'/></svg>
<div class='nm' style='left:1366.3999999999999px;top:1234.2px'>combo_b_c_data</div>
<div class='nd' style='left:1340.6999999999998px;top:1269.13px'>No description</div>
<div class='mat' style='left:1340.6999999999998px;top:1305.53px'>Materialized</div>
<div class='dt' style='right:1145.3000000000002px;top:1305.7px;font-size:17.6px'>Mar 2, 11:56 PM</div>
<div class='tag' style='left:1627.0px;top:1345.0px;width:124.6px'></div>
<svg class='a' style='left:1636.8px;top:1349.75px' width='25.5' height='24.5' viewBox='0 0 24 24' preserveAspectRatio='none'>
<path d='M3.2 4 C3.5 1.2 8 0.6 12 1.2 C16 0.6 21 1.2 21.3 4.2 C21.8 8.5 21 12 19.4 14.2 L21 15.4 C21.6 16.3 20.8 17.2 19.6 16.8 L17.6 16.2 C16.6 18.2 15.6 19.3 15.1 20.8 C14.6 22.6 13.4 23 12.4 22.6 C11.4 22.1 11 20.3 11 17.8 C8.8 17.6 6.8 16.4 5.4 14 C3.5 11 3 7 3.2 4 Z' fill='#3a6d9c' stroke='#30343f' stroke-width='1.3' stroke-linejoin='round'/>
<path d='M8.4 4.2 C7.2 7.5 7.8 11 10 13.2 M15.8 3.8 C17.4 7 17 11 14.8 13.6 C13.6 15.2 13.2 18 13.6 21.2 M10.8 9.5 C11.5 8.8 12.5 8.8 13 9.5' stroke='#d8e4ef' stroke-width='0.9' fill='none'/></svg>
<div class='tagt' style='left:1667.4px;top:1354.21px'>Postgres</div>
<div class='node' style='left:1865px;top:519px'><div class='nh'></div><div class='ns'></div></div>
<svg class='a' style='left:1879.2px;top:530.5px' width='18' height='19' viewBox='0 0 18 19'>
<rect x='1.1' y='1.1' width='15.3' height='15.9' rx='1' stroke='#030615' stroke-width='2.2' fill='none'/>
<path d='M1.1 7.4 H16.4 M1.1 12.8 H16.4 M6.5 7.4 V17 M11.6 7.4 V17' stroke='#030615' stroke-width='1.4'/></svg>
<div class='nm' style='left:1905.5px;top:533.1px'>a_b_c_for_sales</div>
<div class='nd' style='left:1879.8px;top:568.03px'>No description</div>
<div class='mat' style='left:1879.8px;top:604.43px'>Materialized</div>
<div class='dt' style='right:606.2000000000003px;top:604.6px;font-size:17.6px'>Mar 2, 11:56 PM</div>
<div class='tag' style='left:2245.7px;top:643.9px;width:45px'></div>
<svg class='a' style='left:2256.7px;top:653.4px' width='24' height='15' viewBox='0 0 24 15'>
<rect x='0.8' y='0.8' width='21.6' height='12.6' rx='2.2' fill='none' stroke='#030615' stroke-width='1.4'/>
<text x='11.6' y='10.3' text-anchor='middle' font-family='Liberation Sans' font-weight='700' font-size='8.6' fill='#030615'>CSV</text></svg>
<div class='node' style='left:1865px;top:832px'><div class='nh'></div><div class='ns'></div></div>
<svg class='a' style='left:1879.2px;top:843.6px' width='18' height='19' viewBox='0 0 18 19'>
<rect x='1.1' y='1.1' width='15.3' height='15.9' rx='1' stroke='#030615' stroke-width='2.2' fill='none'/>
<path d='M1.1 7.4 H16.4 M1.1 12.8 H16.4 M6.5 7.4 V17 M11.6 7.4 V17' stroke='#030615' stroke-width='1.4'/></svg>
<div class='nm' style='left:1905.5px;top:846.2px'>summary_stats_1</div>
<div class='nd' style='left:1879.8px;top:881.13px'>No description</div>
<div class='mat' style='left:1879.8px;top:917.53px'>Materialized</div>
<div class='dt' style='right:606.2000000000003px;top:917.7px;font-size:17.6px'>Mar 2, 11:56 PM</div>
<div class='tag' style='left:2168.5px;top:957.0px;width:122.2px'></div>
<svg class='a' style='left:2181.5px;top:964.0px' width='19' height='20' viewBox='0 0 19 20'>
<path d='M1.3 9 V1 L18 5 V16.3 H14.7' fill='none' stroke='#e8c547' stroke-width='0.9'/>
<rect x='0' y='10.5' width='2.2' height='5' rx='1.1' fill='#e8c547'/><rect x='3.8' y='8.6' width='2.2' height='7.6' rx='1.1' fill='#e8c547'/>
<rect x='7' y='7.5' width='2.2' height='10' rx='1.1' fill='#e8c547'/><rect x='10.8' y='6.5' width='2' height='12.3' rx='1' fill='#e8c547'/></svg>
<div class='tagt' style='left:2208.4px;top:966.21px'>Power BI</div>
<div class='node' style='left:1865px;top:1076px'><div class='nh'></div><div class='ns'></div></div>
<svg class='a' style='left:1879.2px;top:1087.5px' width='18' height='19' viewBox='0 0 18 19'>
<rect x='1.1' y='1.1' width='15.3' height='15.9' rx='1' stroke='#030615' stroke-width='2.2' fill='none'/>
<path d='M1.1 7.4 H16.4 M1.1 12.8 H16.4 M6.5 7.4 V17 M11.6 7.4 V17' stroke='#030615' stroke-width='1.4'/></svg>
<div class='nm' style='left:1905.5px;top:1090.1px'>b_c_for_sales</div>
<div class='nd' style='left:1879.8px;top:1125.03px'>No description</div>
<div class='mat' style='left:1879.8px;top:1161.43px'>Materialized</div>
<div class='dt' style='right:606.2000000000003px;top:1161.6px;font-size:17.6px'>Mar 2, 11:56 PM</div>
<div class='tag' style='left:2245.7px;top:1200.8999999999999px;width:45px'></div>
<svg class='a' style='left:2256.7px;top:1210.3999999999999px' width='24' height='15' viewBox='0 0 24 15'>
<rect x='0.8' y='0.8' width='21.6' height='12.6' rx='2.2' fill='none' stroke='#030615' stroke-width='1.4'/>
<text x='11.6' y='10.3' text-anchor='middle' font-family='Liberation Sans' font-weight='700' font-size='8.6' fill='#030615'>CSV</text></svg>
<div class='node' style='left:1865px;top:1320px'><div class='nh'></div><div class='ns'></div></div>
<svg class='a' style='left:1879.2px;top:1331.5px' width='18' height='19' viewBox='0 0 18 19'>
<rect x='1.1' y='1.1' width='15.3' height='15.9' rx='1' stroke='#030615' stroke-width='2.2' fill='none'/>
<path d='M1.1 7.4 H16.4 M1.1 12.8 H16.4 M6.5 7.4 V17 M11.6 7.4 V17' stroke='#030615' stroke-width='1.4'/></svg>
<div class='nm' style='left:1905.5px;top:1334.1px'>summary_stats_2</div>
<div class='nd' style='left:1879.8px;top:1369.03px'>No description</div>
<div class='mat' style='left:1879.8px;top:1405.43px'>Materialized</div>
<div class='dt' style='right:606.2000000000003px;top:1405.6px;font-size:17.6px'>Mar 2, 11:56 PM</div>
<div class='tag' style='left:2168.5px;top:1444.8999999999999px;width:122.2px'></div>
<svg class='a' style='left:2181.5px;top:1451.8999999999999px' width='19' height='20' viewBox='0 0 19 20'>
<path d='M1.3 9 V1 L18 5 V16.3 H14.7' fill='none' stroke='#e8c547' stroke-width='0.9'/>
<rect x='0' y='10.5' width='2.2' height='5' rx='1.1' fill='#e8c547'/><rect x='3.8' y='8.6' width='2.2' height='7.6' rx='1.1' fill='#e8c547'/>
<rect x='7' y='7.5' width='2.2' height='10' rx='1.1' fill='#e8c547'/><rect x='10.8' y='6.5' width='2' height='12.3' rx='1' fill='#e8c547'/></svg>
<div class='tagt' style='left:2208.4px;top:1454.11px'>Power BI</div>
<div class='a' style='left:70px;top:1549px;width:2720px;height:80px;border-radius:20px;background:#fff;box-shadow:0 0 80px rgba(20,20,30,0.19)'></div>
<div class='a' style='left:2794px;top:962px;width:64px;height:407px;border:2px solid #c3c8d0;border-radius:16px;background:#fff'></div>
<div class='a' style='left:2795px;top:1024px;width:62px;height:2px;background:#c3c8d0'></div>
<div class='a' style='left:2795px;top:1305.5px;width:62px;height:2px;background:#c3c8d0'></div>
<svg class='a' style='left:2810px;top:978px' width='32' height='32' viewBox='0 0 32 32'>
<circle cx='12.5' cy='12.5' r='7.5' stroke='#030615' stroke-width='2.6' fill='none'/><path d='M18 18 L27 27' stroke='#030615' stroke-width='2.8'/>
<path d='M12.5 9 V16 M9 12.5 H16' stroke='#030615' stroke-width='2.4'/></svg>
<div class='a' style='left:2816px;top:1050px;width:16px;height:231px;border-radius:8px;background:#c2c6cf'></div>
<div class='a' style='left:2806.5px;top:1143.5px;width:35px;height:35px;border-radius:18px;background:#eef0f3;border:4px solid #8c93a1'></div>
<svg class='a' style='left:2810px;top:1320px' width='32' height='32' viewBox='0 0 32 32'>
<circle cx='12.5' cy='12.5' r='7.5' stroke='#030615' stroke-width='2.6' fill='none'/><path d='M18 18 L27 27' stroke='#030615' stroke-width='2.8'/>
<path d='M9 12.5 H16' stroke='#030615' stroke-width='2.4'/></svg>
<div class='a' style='left:2794px;top:1386px;width:64px;height:63px;border:2px solid #c3c8d0;border-radius:16px;background:#fff'></div>
<svg class='a' style='left:2810px;top:1401.5px' width='32' height='32' viewBox='0 0 32 32'>
<path d='M13.5 3.5 H18.5 L19.3 7.2 L22.3 8.9 L25.9 7.7 L28.4 12 L25.6 14.5 V17.5 L28.4 20 L25.9 24.3 L22.3 23.1 L19.3 24.8 L18.5 28.5 H13.5 L12.7 24.8 L9.7 23.1 L6.1 24.3 L3.6 20 L6.4 17.5 V14.5 L3.6 12 L6.1 7.7 L9.7 8.9 L12.7 7.2 Z' stroke='#030615' stroke-width='2.5' fill='none' stroke-linejoin='round'/>
<circle cx='16' cy='16' r='4' stroke='#030615' stroke-width='2.5' fill='none'/></svg>
<div class='a' style='left:2794px;top:1467px;width:64px;height:62px;border:2px solid #c3c8d0;border-radius:16px;background:#fff'></div>
<svg class='a' style='left:2810px;top:1482px' width='32' height='32' viewBox='0 0 32 32'>
<circle cx='16' cy='16' r='12' stroke='#030615' stroke-width='2.6' fill='none'/>
<path d='M16 8.5 V17' stroke='#030615' stroke-width='2.6'/><path d='M11.5 13.5 L16 18 L20.5 13.5' stroke='#030615' stroke-width='2.6' fill='none'/>
<path d='M9.5 21.5 H22.5' stroke='#030615' stroke-width='2.6'/></svg>
<div class='a' style='left:2878px;top:345px;width:4px;height:1199px;background:#dfe1e5'></div>
</body></html>
